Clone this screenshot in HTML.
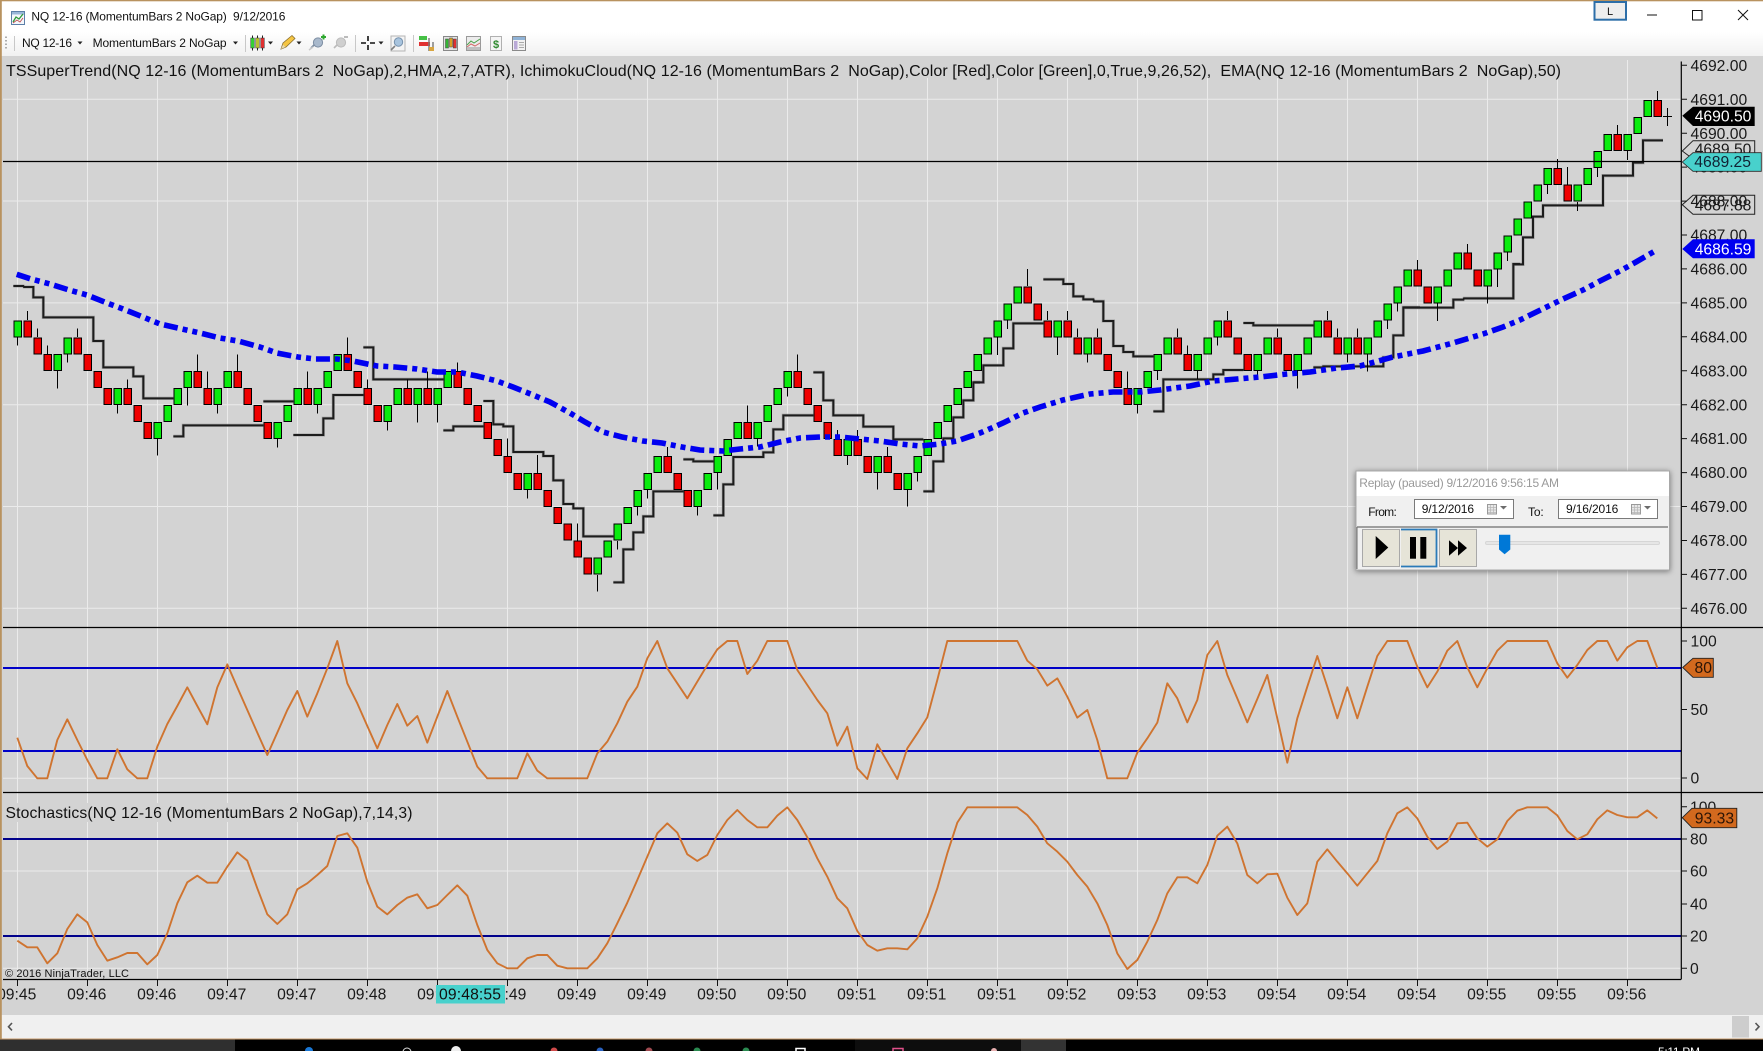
<!DOCTYPE html>
<html><head><meta charset="utf-8"><title>NQ 12-16 (MomentumBars 2 NoGap) 9/12/2016</title>
<style>
html,body{margin:0;padding:0;background:#d3d3d3;width:1763px;height:1051px;overflow:hidden}
svg{display:block}
text{font-family:"Liberation Sans",sans-serif;white-space:pre;fill:#111}
.ax text{font-size:15.7px;fill:#1a1a1a}
.osc{fill:none;stroke:#cf7430;stroke-width:1.9;stroke-linejoin:round;vector-effect:non-scaling-stroke}
.st{fill:none;stroke-linejoin:miter}
</style></head><body>
<svg xmlns="http://www.w3.org/2000/svg" width="1763" height="1051" viewBox="0 0 1763 1051">
<defs>
<linearGradient id="tb" x1="0" y1="0" x2="0" y2="1"><stop offset="0" stop-color="#fff"/><stop offset="1" stop-color="#f1f1f1"/></linearGradient>
<filter id="sh" x="-10%" y="-20%" width="120%" height="140%"><feDropShadow dx="0" dy="1" stdDeviation="3" flood-color="#000" flood-opacity=".45"/></filter>
<clipPath id="ch"><rect x="2" y="56" width="1761" height="960"/></clipPath>
</defs>
<!-- background -->
<rect width="1763" height="1051" fill="#d3d3d3"/>
<rect width="1763" height="32" fill="#fff"/>
<rect y="32" width="1763" height="24" fill="url(#tb)"/>
<rect width="1763" height="1.3" fill="#b8925f"/>

<!-- grid -->
<path stroke="#ebebeb" stroke-width="1" fill="none" d="M17.5 60V979M87.5 60V979M157.5 60V979M227.5 60V979M297.5 60V979M367.5 60V979M437.5 60V979M507.5 60V979M577.5 60V979M647.5 60V979M717.5 60V979M787.5 60V979M857.5 60V979M927.5 60V979M997.5 60V979M1067.5 60V979M1137.5 60V979M1207.5 60V979M1277.5 60V979M1347.5 60V979M1417.5 60V979M1487.5 60V979M1557.5 60V979M1627.5 60V979"/>
<path stroke="#ebebeb" stroke-width="1" fill="none" d="M3 99.2H1681M3 201H1681M3 302.9H1681M3 404.7H1681M3 506.5H1681M3 608.3H1681M3 778.3H1681M3 871H1681M3 968.3H1681"/>
<rect x="4" y="60" width="1558" height="18" fill="#d3d3d3"/>
<rect x="4" y="803" width="410" height="19" fill="#d3d3d3"/>

<!-- supertrend -->
<g class="st" stroke="#8a8a8a" stroke-opacity=".55">
<path transform="translate(0,260) scale(.33333)" stroke-width="10" d="M40 78H70L72 81H100V112H130V172H280V243H310V322H400V349H430V415H520M520 529H550V496H790M790 424H880M880 525H970V475H1000V405H1090M1090 262H1120V358H1330M1330 511H1360V499H1450"/>
<path transform="translate(480,340) scale(.33333)" stroke-width="10" d="M10 183H40V253H70V259H100V336H190V348H220V421H250V492H280V505H310V589H400M400 727H430V628H460V577H490V529H520V454H610M610 358H640V364H700M700 526H730V433H760V351H850V337H880V268H910V226H1000M1000 97H1030V181H1060V226H1150V260H1240V298H1330M1330 454H1360V364H1390V295H1420V232H1450V181H1480V127H1500"/>
<path transform="translate(960,260) scale(.33333)" stroke-width="10" d="M40 367H70V316H130V265H160V190H250M250 58H310V72H340V109H370V118H400L402 124H430V183H460V258H490V276H520V289H580M580 454H610V358H760V343H790V330H850M850 189H880V196H1060M1060 322H1090V319H1270V292H1300V226H1330V142H1380"/>
<path transform="translate(1380,240) scale(.33333)" stroke-width="10" d="M70 203H220V179H250L252 175H400V72H420"/>
<path transform="translate(1363,0) scale(.33333)" stroke-width="10" d="M450 793H480V712H510V650H540V616H720V527H810V488H840V421H900"/>
</g>
<g class="st" stroke="#1c1c1c">
<path transform="translate(0,260) scale(.33333)" stroke-width="6" d="M40 78H70L72 81H100V112H130V172H280V243H310V322H400V349H430V415H520M520 529H550V496H790M790 424H880M880 525H970V475H1000V405H1090M1090 262H1120V358H1330M1330 511H1360V499H1450"/>
<path transform="translate(480,340) scale(.33333)" stroke-width="6" d="M10 183H40V253H70V259H100V336H190V348H220V421H250V492H280V505H310V589H400M400 727H430V628H460V577H490V529H520V454H610M610 358H640V364H700M700 526H730V433H760V351H850V337H880V268H910V226H1000M1000 97H1030V181H1060V226H1150V260H1240V298H1330M1330 454H1360V364H1390V295H1420V232H1450V181H1480V127H1500"/>
<path transform="translate(960,260) scale(.33333)" stroke-width="6" d="M40 367H70V316H130V265H160V190H250M250 58H310V72H340V109H370V118H400L402 124H430V183H460V258H490V276H520V289H580M580 454H610V358H760V343H790V330H850M850 189H880V196H1060M1060 322H1090V319H1270V292H1300V226H1330V142H1380"/>
<path transform="translate(1380,240) scale(.33333)" stroke-width="6" d="M70 203H220V179H250L252 175H400V72H420"/>
<path transform="translate(1363,0) scale(.33333)" stroke-width="6" d="M450 793H480V712H510V650H540V616H720V527H810V488H840V421H900"/>
</g>

<!-- wicks -->
<path stroke="#000" stroke-width="1" fill="none" shape-rendering="crispEdges" d="M27.5 320V311M37.5 337V328.3M47.5 354V345.3M77.5 337V328.3M127.5 388V379.3M197.5 371V354.3M207.5 388V371.3M237.5 371V354.3M307.5 388V371.3M347.5 354V337.3M367.5 388V379.3M407.5 388V379.3M427.5 388V371.3M457.5 371V362.3M507.5 456V438.3M537.5 473V455M577.5 541V523.3M667.5 456V447M747.5 422V405.3M797.5 371V354.3M837.5 439V430M857.5 439V430M887.5 456V447M1027.5 286V269M1047.5 320V311M1067.5 320V311M1077.5 337V328.3M1097.5 337V328.3M1127.5 388V371.3M1177.5 337V328.3M1187.5 354V345.3M1227.5 320V311M1277.5 337V328.3M1327.5 320V311M1337.5 337V328.3M1357.5 337V328.3M1417.5 270V260M1467.5 253V244M1557.5 168V159M1567.5 185V167M1617.5 134V125M1657.5 100V91
M17.5 337V345.7M57.5 371V388.7M67.5 354V362.7M117.5 405V413.7M157.5 439V455.7M187.5 388V405.3M217.5 405V413.7M277.5 439V447.7M317.5 405V413.7M387.5 422V430.7M417.5 405V422.3M437.5 405V422.3M527.5 490V498.7M597.5 575V591.7M617.5 541V549.3M637.5 507V515.3M647.5 490V498.7M697.5 507V515.7M717.5 473V489.3M757.5 439V446.7M787.5 388V396.7M847.5 456V465M877.5 473V489.7M907.5 490V506.7M917.5 473V481.7M997.5 337V355M1007.5 320V329M1057.5 337V355M1087.5 354V362.7M1137.5 405V413.7M1157.5 371V380M1197.5 371V379M1217.5 337V345.7M1257.5 371V379M1297.5 371V388.7M1347.5 354V362.7M1367.5 354V371.3M1387.5 320V329M1397.5 303V311.7M1437.5 303V321M1487.5 286V303.3M1497.5 269V287M1507.5 252V261M1547.5 185V194M1577.5 202V211M1597.5 168V177M1627.5 151V160
M1667.5 108V126M1663 116.5H1672"/>

<!-- green bodies -->
<path fill="#0aec0e" stroke="#000" stroke-width="1" shape-rendering="crispEdges" d="M13.8 320.8h7.5v16h-7.5zM53.8 354.7h7.5v16h-7.5zM63.8 337.8h7.5v16h-7.5zM113.8 388.6h7.5v16h-7.5zM153.8 422.5h7.5v16h-7.5zM163.8 405.6h7.5v16h-7.5zM173.8 388.6h7.5v16h-7.5zM183.8 371.7h7.5v16h-7.5zM213.8 388.6h7.5v16h-7.5zM223.8 371.7h7.5v16h-7.5zM273.8 422.5h7.5v16h-7.5zM283.8 405.6h7.5v16h-7.5zM293.8 388.6h7.5v16h-7.5zM313.8 388.6h7.5v16h-7.5zM323.8 371.7h7.5v16h-7.5zM333.8 354.7h7.5v16h-7.5zM383.8 405.6h7.5v16h-7.5zM393.8 388.6h7.5v16h-7.5zM413.8 388.6h7.5v16h-7.5zM433.8 388.6h7.5v16h-7.5zM443.8 371.7h7.5v16h-7.5zM523.8 473.4h7.5v16h-7.5zM593.8 558.1h7.5v16h-7.5zM603.8 541.2h7.5v16h-7.5zM613.8 524.2h7.5v16h-7.5zM623.8 507.3h7.5v16h-7.5zM633.8 490.3h7.5v16h-7.5zM643.8 473.4h7.5v16h-7.5zM653.8 456.4h7.5v16h-7.5zM693.8 490.3h7.5v16h-7.5zM703.8 473.4h7.5v16h-7.5zM713.8 456.4h7.5v16h-7.5zM723.8 439.5h7.5v16h-7.5zM733.8 422.5h7.5v16h-7.5zM753.8 422.5h7.5v16h-7.5zM763.8 405.6h7.5v16h-7.5zM773.8 388.6h7.5v16h-7.5zM783.8 371.7h7.5v16h-7.5zM843.8 439.5h7.5v16h-7.5zM873.8 456.4h7.5v16h-7.5zM903.8 473.4h7.5v16h-7.5zM913.8 456.4h7.5v16h-7.5zM923.8 439.5h7.5v16h-7.5zM933.8 422.5h7.5v16h-7.5zM943.8 405.6h7.5v16h-7.5zM953.8 388.6h7.5v16h-7.5zM963.8 371.7h7.5v16h-7.5zM973.8 354.7h7.5v16h-7.5zM983.8 337.8h7.5v16h-7.5zM993.8 320.8h7.5v16h-7.5zM1003.8 303.9h7.5v16h-7.5zM1013.8 286.9h7.5v16h-7.5zM1053.8 320.8h7.5v16h-7.5zM1083.8 337.8h7.5v16h-7.5zM1133.8 388.6h7.5v16h-7.5zM1143.8 371.7h7.5v16h-7.5zM1153.8 354.7h7.5v16h-7.5zM1163.8 337.8h7.5v16h-7.5zM1193.8 354.7h7.5v16h-7.5zM1203.8 337.8h7.5v16h-7.5zM1213.8 320.8h7.5v16h-7.5zM1253.8 354.7h7.5v16h-7.5zM1263.8 337.8h7.5v16h-7.5zM1293.8 354.7h7.5v16h-7.5zM1303.8 337.8h7.5v16h-7.5zM1313.8 320.8h7.5v16h-7.5zM1343.8 337.8h7.5v16h-7.5zM1363.8 337.8h7.5v16h-7.5zM1373.8 320.8h7.5v16h-7.5zM1383.8 303.9h7.5v16h-7.5zM1393.8 286.9h7.5v16h-7.5zM1403.8 270h7.5v16h-7.5zM1433.8 286.9h7.5v16h-7.5zM1443.8 270h7.5v16h-7.5zM1453.8 253h7.5v16h-7.5zM1483.8 270h7.5v16h-7.5zM1493.8 253h7.5v16h-7.5zM1503.8 236.1h7.5v16h-7.5zM1513.8 219.1h7.5v16h-7.5zM1523.8 202.2h7.5v16h-7.5zM1533.8 185.2h7.5v16h-7.5zM1543.8 168.3h7.5v16h-7.5zM1573.8 185.2h7.5v16h-7.5zM1583.8 168.3h7.5v16h-7.5zM1593.8 151.3h7.5v16h-7.5zM1603.8 134.4h7.5v16h-7.5zM1623.8 134.4h7.5v16h-7.5zM1633.8 117.4h7.5v16h-7.5zM1643.8 100.4h7.5v16h-7.5z"/>
<!-- red bodies -->
<path fill="#f00000" stroke="#000" stroke-width="1" shape-rendering="crispEdges" d="M23.8 320.8h7.5v16h-7.5zM33.8 337.8h7.5v16h-7.5zM43.8 354.7h7.5v16h-7.5zM73.8 337.8h7.5v16h-7.5zM83.8 354.7h7.5v16h-7.5zM93.8 371.7h7.5v16h-7.5zM103.8 388.6h7.5v16h-7.5zM123.8 388.6h7.5v16h-7.5zM133.8 405.6h7.5v16h-7.5zM143.8 422.5h7.5v16h-7.5zM193.8 371.7h7.5v16h-7.5zM203.8 388.6h7.5v16h-7.5zM233.8 371.7h7.5v16h-7.5zM243.8 388.6h7.5v16h-7.5zM253.8 405.6h7.5v16h-7.5zM263.8 422.5h7.5v16h-7.5zM303.8 388.6h7.5v16h-7.5zM343.8 354.7h7.5v16h-7.5zM353.8 371.7h7.5v16h-7.5zM363.8 388.6h7.5v16h-7.5zM373.8 405.6h7.5v16h-7.5zM403.8 388.6h7.5v16h-7.5zM423.8 388.6h7.5v16h-7.5zM453.8 371.7h7.5v16h-7.5zM463.8 388.6h7.5v16h-7.5zM473.8 405.6h7.5v16h-7.5zM483.8 422.5h7.5v16h-7.5zM493.8 439.5h7.5v16h-7.5zM503.8 456.4h7.5v16h-7.5zM513.8 473.4h7.5v16h-7.5zM533.8 473.4h7.5v16h-7.5zM543.8 490.3h7.5v16h-7.5zM553.8 507.3h7.5v16h-7.5zM563.8 524.2h7.5v16h-7.5zM573.8 541.2h7.5v16h-7.5zM583.8 558.1h7.5v16h-7.5zM663.8 456.4h7.5v16h-7.5zM673.8 473.4h7.5v16h-7.5zM683.8 490.3h7.5v16h-7.5zM743.8 422.5h7.5v16h-7.5zM793.8 371.7h7.5v16h-7.5zM803.8 388.6h7.5v16h-7.5zM813.8 405.6h7.5v16h-7.5zM823.8 422.5h7.5v16h-7.5zM833.8 439.5h7.5v16h-7.5zM853.8 439.5h7.5v16h-7.5zM863.8 456.4h7.5v16h-7.5zM883.8 456.4h7.5v16h-7.5zM893.8 473.4h7.5v16h-7.5zM1023.8 286.9h7.5v16h-7.5zM1033.8 303.9h7.5v16h-7.5zM1043.8 320.8h7.5v16h-7.5zM1063.8 320.8h7.5v16h-7.5zM1073.8 337.8h7.5v16h-7.5zM1093.8 337.8h7.5v16h-7.5zM1103.8 354.7h7.5v16h-7.5zM1113.8 371.7h7.5v16h-7.5zM1123.8 388.6h7.5v16h-7.5zM1173.8 337.8h7.5v16h-7.5zM1183.8 354.7h7.5v16h-7.5zM1223.8 320.8h7.5v16h-7.5zM1233.8 337.8h7.5v16h-7.5zM1243.8 354.7h7.5v16h-7.5zM1273.8 337.8h7.5v16h-7.5zM1283.8 354.7h7.5v16h-7.5zM1323.8 320.8h7.5v16h-7.5zM1333.8 337.8h7.5v16h-7.5zM1353.8 337.8h7.5v16h-7.5zM1413.8 270h7.5v16h-7.5zM1423.8 286.9h7.5v16h-7.5zM1463.8 253h7.5v16h-7.5zM1473.8 270h7.5v16h-7.5zM1553.8 168.3h7.5v16h-7.5zM1563.8 185.2h7.5v16h-7.5zM1613.8 134.4h7.5v16h-7.5zM1653.8 100.4h7.5v16h-7.5z"/>

<!-- EMA -->
<polyline fill="none" stroke="#0000f0" stroke-width="5.6" stroke-dasharray="14 5 5 5 5 5" points="16.7,274.3 30,278.7 50,284 69,290 87,295 107,303 123,309 143,317 160,324 182,329 200,333 220,338 238,341 260,347 277,353 298,357 315,359 337,359 353,361 377,366 395,367 417,369 437,372 457,372 477,376 497,381 513,387 533,395 550,402 570,413 585,422 603,432 622,437 643,441 662,443 682,447 700,450 723,451 740,449 760,447 780,442 800,438 820,437 840,437 860,439 880,441 900,444 920,446 940,444 957,441 980,433 1003,423 1023,413 1040,407 1063,400 1090,394 1113,392 1140,392 1160,390 1190,386 1213,381 1237,379 1260,377 1287,374 1310,372 1337,368 1360,366 1393,357 1423,351 1453,343 1483,334 1503,327 1520,320 1563,299 1583,290 1600,281 1620,271 1636,262 1655,251"/>

<!-- horizontal rules -->
<path stroke="#000" stroke-width="1.2" fill="none" d="M3 161.5H1681M3 627.5H1763M3 792.5H1763M3 979.5H1681"/>
<path stroke="#0000c8" stroke-width="2" fill="none" d="M3 668H1681M3 751H1681"/>
<path stroke="#00008b" stroke-width="2" fill="none" d="M3 839H1681M3 936H1681"/>

<!-- oscillators -->
<polyline class="osc" transform="translate(17.3,630) scale(10,.33333)" points="0,323 1,408 2,445 3,445 4,330 5,268 6,330 7,390 8,445 9,445 10,358 11,418 12,445 13,445 14,350 15,282 16,228 17,172 18,228 19,283 20,172 21,103 22,172 23,240 24,308 25,375 26,308 27,240 28,183 29,260 30,190 31,115 32,33 33,160 34,220 35,288 36,355 37,285 38,222 39,287 40,258 41,338 42,260 43,183 44,260 45,335 46,410 47,445 48,445 49,445 50,445 51,370 52,422 53,445 54,445 55,445 56,445 57,445 58,370 59,335 60,280 61,215 62,170 63,85 64,33 65,115 66,160 67,205 68,155 69,105 70,58 71,33 72,33 73,132 74,92 75,33 76,33 77,33 78,120 79,165 80,210 81,250 82,347 83,290 84,415 85,447 86,343 87,395 88,447 89,355 90,310 91,262 92,150 93,33 94,33 95,33 96,33 97,33 98,33 99,33 100,33 101,92 102,118 103,167 104,145 105,200 106,263 107,240 108,330 109,445 110,445 111,445 112,368 113,325 114,278 115,160 116,205 117,277 118,210 119,75 120,33 121,135 122,205 123,277 124,207 125,135 126,265 127,398 128,265 129,170 130,78 131,170 132,265 133,172 134,265 135,170 136,78 137,33 138,33 139,33 140,110 141,172 142,125 143,62 144,33 145,112 146,172 147,115 148,62 149,33 150,33 151,33 152,33 153,33 154,100 155,143 156,105 157,60 158,33 159,33 160,92 161,52 162,33 163,33 164,113"/>
<polyline class="osc" transform="translate(17.3,630) scale(10,.33333)" points="0,932 1,952 2,952 3,1000 4,970 5,897 6,853 7,877 8,945 9,992 10,982 11,969 12,969 13,1003 14,975 15,910 16,820 17,757 18,737 19,758 20,758 21,710 22,667 23,692 24,775 25,853 26,882 27,853 28,778 29,760 30,735 31,708 32,618 33,610 34,653 35,755 36,830 37,853 38,825 39,803 40,793 41,835 42,825 43,795 44,766 45,797 46,885 47,960 48,1000 49,1015 50,1015 51,985 52,975 53,975 54,1007 55,1015 56,1015 57,1015 58,985 59,940 60,880 61,818 62,750 63,680 64,610 65,580 66,608 67,673 68,693 69,675 70,615 71,570 72,540 73,570 74,592 75,592 76,557 77,532 78,570 79,622 80,685 81,740 82,805 83,835 84,903 85,945 86,962 87,955 88,955 89,958 90,925 91,860 92,775 93,670 94,578 95,532 96,532 97,532 98,532 99,532 100,532 101,555 102,590 103,640 104,665 105,695 106,735 107,770 108,820 109,885 110,970 111,1017 112,990 113,935 114,870 115,790 116,742 117,742 118,760 119,705 120,617 121,590 122,640 123,735 124,760 125,733 126,731 127,803 128,855 129,820 130,695 131,658 132,695 133,730 134,767 135,730 136,693 137,610 138,550 139,532 140,565 141,620 142,657 143,635 144,580 145,578 146,625 147,650 148,628 149,573 150,542 151,532 152,532 153,532 154,556 155,603 156,628 157,613 158,568 159,541 160,555 161,562 162,562 163,541 164,565"/>

<!-- chart titles -->
<text x="6" y="76" font-size="16" textLength="1555" lengthAdjust="spacing">TSSuperTrend(NQ 12-16 (MomentumBars 2  NoGap),2,HMA,2,7,ATR), IchimokuCloud(NQ 12-16 (MomentumBars 2  NoGap),Color [Red],Color [Green],0,True,9,26,52),  EMA(NQ 12-16 (MomentumBars 2  NoGap),50)</text>
<text x="5.5" y="818" font-size="15.7" textLength="407" lengthAdjust="spacing">Stochastics(NQ 12-16 (MomentumBars 2 NoGap),7,14,3)</text>
<text x="5" y="977" font-size="11" textLength="124" lengthAdjust="spacing">© 2016 NinjaTrader, LLC</text>

<!-- right axis -->
<path stroke="#000" stroke-width="1.2" fill="none" d="M1681.3 61.5V979.5"/>
<path stroke="#111" stroke-width="1" fill="none" d="M1681 65.3h6M1681 99.2h6M1681 133.2h6M1681 167.1h6M1681 201.1h6M1681 235h6M1681 268.9h6M1681 302.9h6M1681 336.8h6M1681 370.8h6M1681 404.7h6M1681 438.6h6M1681 472.6h6M1681 506.5h6M1681 540.5h6M1681 574.4h6M1681 608.3h6M1681 641h6M1681 709.5h6M1681 778h6M1681 806.7h6M1681 839h6M1681 871h6M1681 904h6M1681 936h6M1681 968.3h6
M17.5 980v6M87.5 980v6M157.5 980v6M227.5 980v6M297.5 980v6M367.5 980v6M437.5 980v6M507.5 980v6M577.5 980v6M647.5 980v6M717.5 980v6M787.5 980v6M857.5 980v6M927.5 980v6M997.5 980v6M1067.5 980v6M1137.5 980v6M1207.5 980v6M1277.5 980v6M1347.5 980v6M1417.5 980v6M1487.5 980v6M1557.5 980v6M1627.5 980v6"/>
<g class="ax">
<text x="1690.5" y="70.9">4692.00</text><text x="1690.5" y="104.8">4691.00</text><text x="1690.5" y="138.8">4690.00</text><text x="1690.5" y="172.7">4689.00</text><text x="1690.5" y="206.7">4688.00</text><text x="1690.5" y="240.6">4687.00</text><text x="1690.5" y="274.5">4686.00</text><text x="1690.5" y="308.5">4685.00</text><text x="1690.5" y="342.4">4684.00</text><text x="1690.5" y="376.4">4683.00</text><text x="1690.5" y="410.3">4682.00</text><text x="1690.5" y="444.2">4681.00</text><text x="1690.5" y="478.2">4680.00</text><text x="1690.5" y="512.1">4679.00</text><text x="1690.5" y="546.1">4678.00</text><text x="1690.5" y="580">4677.00</text><text x="1690.5" y="613.9">4676.00</text>
<text x="1690.5" y="646.6">100</text><text x="1690.5" y="715.1">50</text><text x="1690.5" y="783.6">0</text>
<text x="1690" y="812.3">100</text><text x="1690" y="844.6">80</text><text x="1690" y="876.6">60</text><text x="1690" y="909.6">40</text><text x="1690" y="941.6">20</text><text x="1690" y="973.9">0</text>
</g>

<!-- price flags -->
<g class="ax">
<path d="M1682.3 151 1693 140.7H1754.7V159H1693Z" fill="none" stroke="#222"/>
<text x="1694.7" y="154.5">4689.50</text>
<path d="M1682.3 204.8 1693 195.3H1754.7V214.3H1693Z" fill="none" stroke="#222"/>
<text x="1694.7" y="210.4">4687.88</text>
<path d="M1682.3 115.7 1693 106.7H1754.7V126H1693Z" fill="#000"/>
<text x="1694.7" y="121.5" style="fill:#fff">4690.50</text>
<path d="M1682.3 162 1693 152.7H1761.3V171.3H1693Z" fill="#48d1cc" stroke="#2a2a2a" stroke-width=".8"/>
<text x="1694.3" y="167" style="fill:#123">4689.25</text>
<path d="M1682.3 249 1693 239.3H1754.7V258.3H1693Z" fill="#0000f0"/>
<text x="1694.7" y="254.6" style="fill:#fff">4686.59</text>
<path d="M1682.7 667.5 1693 658.3H1713.3V677.3H1693Z" fill="#d2691e" stroke="#222" stroke-width=".9"/>
<text x="1694.5" y="673.2" style="fill:#2a1406">80</text>
<path d="M1682.3 817.7 1692 808.3H1736.8V827.7H1692Z" fill="#d2691e" stroke="#222" stroke-width=".9"/>
<text x="1694.8" y="823.3" style="fill:#2a1406">93.33</text>
</g>

<!-- time axis -->
<g class="ax" text-anchor="middle" clip-path="url(#ch)">
<text x="16.7" y="999.3">09:45</text><text x="86.7" y="999.3">09:46</text><text x="156.7" y="999.3">09:46</text><text x="226.7" y="999.3">09:47</text><text x="296.7" y="999.3">09:47</text><text x="366.7" y="999.3">09:48</text><text x="436.7" y="999.3">09:48</text><text x="506.7" y="999.3">09:49</text><text x="576.7" y="999.3">09:49</text><text x="646.7" y="999.3">09:49</text><text x="716.7" y="999.3">09:50</text><text x="786.7" y="999.3">09:50</text><text x="856.7" y="999.3">09:51</text><text x="926.7" y="999.3">09:51</text><text x="996.7" y="999.3">09:51</text><text x="1066.7" y="999.3">09:52</text><text x="1136.7" y="999.3">09:53</text><text x="1206.7" y="999.3">09:53</text><text x="1276.7" y="999.3">09:54</text><text x="1346.7" y="999.3">09:54</text><text x="1416.7" y="999.3">09:54</text><text x="1486.7" y="999.3">09:55</text><text x="1556.7" y="999.3">09:55</text><text x="1626.7" y="999.3">09:56</text>
</g>
<rect x="436" y="985" width="69" height="18.5" fill="#48d1cc"/>
<text x="439" y="999.3" font-size="15.7" fill="#123" textLength="62">09:48:55</text>

<!-- title bar -->
<g>
<rect x="11.5" y="11.5" width="13" height="13" fill="#f4f7fb" stroke="#5c7fa8"/>
<rect x="12" y="12" width="12" height="2.5" fill="#9ab7d8"/>
<polyline points="13,22 16,17 19,19 23,14" fill="none" stroke="#2f9a3a" stroke-width="1.3"/>
<polyline points="13,23 17,20 20,22 23,18" fill="none" stroke="#c05050" stroke-width=".9"/>
<text x="31.4" y="20.3" font-size="12" fill="#222" textLength="254" lengthAdjust="spacing">NQ 12-16 (MomentumBars 2 NoGap)  9/12/2016</text>
<rect x="1594.5" y="2" width="31.5" height="17.7" fill="#eeeeee" stroke="#2d6ea8" stroke-width="2"/>
<text x="1610" y="15" font-size="11" text-anchor="middle" fill="#222">L</text>
<path d="M1647 15H1657" stroke="#111" stroke-width="1" fill="none"/>
<rect x="1692.5" y="10.5" width="9.5" height="9.5" fill="none" stroke="#111"/>
<path d="M1738 10 1748 20M1748 10 1738 20" stroke="#111" stroke-width="1" fill="none"/>
</g>

<!-- toolbar -->
<g>
<path d="M6 36.5v1.5M6 40v1.5M6 43.5v1.5M6 47v1.5" stroke="#999" stroke-width="1.6" fill="none"/>
<path d="M14.5 36V51M245.5 35V52M355.5 35V52M413.5 35V52" stroke="#c8c8c8" fill="none"/>
<text x="22" y="47" font-size="12" fill="#222" textLength="50">NQ 12-16</text>
<path d="M77.5 41.5h5l-2.5 3z" fill="#222"/>
<text x="92.6" y="47" font-size="12" fill="#222" textLength="134">MomentumBars 2 NoGap</text>
<path d="M233 41.5h5l-2.5 3z" fill="#222"/>
<!-- candles -->
<path d="M252.5 35.5V50.5M257.5 35.5V50.5M262.5 35.5V50.5" stroke="#222" fill="none"/>
<rect x="250.7" y="38" width="3.6" height="10" fill="#35d035" stroke="#333" stroke-width=".5"/>
<rect x="255.7" y="38" width="3.6" height="10" fill="#b8c030" stroke="#333" stroke-width=".5"/>
<rect x="260.7" y="38" width="3.6" height="10" fill="#e03030" stroke="#333" stroke-width=".5"/>
<path d="M268 41.5h5l-2.5 3z" fill="#222"/>
<!-- pencil -->
<path d="M281 49 283 43 292 35.5 295 38.5 286 47Z" fill="#f5c542" stroke="#8a7030" stroke-width=".8"/>
<path d="M281 49 283 44.5 285.5 47Z" fill="#e6d8b0"/>
<path d="M296.5 41.5h5l-2.5 3z" fill="#222"/>
<!-- plug + -->
<path d="M311 48 315 44" stroke="#7d8ea3" stroke-width="1.6" fill="none"/>
<circle cx="318" cy="42.5" r="4.6" fill="#a9b9cc" stroke="#7d8ea3"/>
<path d="M321 37h5M323.5 34.5v5" stroke="#2fa82f" stroke-width="2" fill="none"/>
<path d="M309 50 313 47" stroke="#c9c9c9" stroke-width="1.5" fill="none"/>
<!-- plug - -->
<path d="M334 48 338 44" stroke="#bbb" stroke-width="1.6" fill="none"/>
<circle cx="341" cy="42.5" r="4.6" fill="#cfcfcf" stroke="#bbb"/>
<path d="M344 37h4" stroke="#bbb" stroke-width="2" fill="none"/>
<!-- crosshair -->
<path d="M361 43H366M370 43H375M368 36V41M368 45V50" stroke="#111" stroke-width="1.6" fill="none"/>
<path d="M378.5 41.5h5l-2.5 3z" fill="#222"/>
<!-- magnifier doc -->
<rect x="391" y="36" width="14" height="15" fill="#f4f4f4" stroke="#b5b5b5"/>
<circle cx="398.5" cy="42" r="4.2" fill="#a8c4de" stroke="#7792ad"/>
<path d="M395 46 391 50" stroke="#808080" stroke-width="1.6" fill="none"/>
<!-- bars -->
<rect x="419" y="36" width="8" height="4" fill="#45c045"/><rect x="419" y="42" width="11" height="4" fill="#e03030"/>
<path d="M429 38V51M433 42V51" stroke="#777" stroke-width="1.4" fill="none"/>
<rect x="429" y="47" width="5" height="4" fill="#d8a540"/>
<!-- candles box -->
<rect x="443.5" y="36.5" width="14" height="14" fill="#e3e3e3" stroke="#888"/>
<rect x="445.5" y="39" width="3" height="9" fill="#35b535" stroke="#444" stroke-width=".5"/>
<rect x="449.5" y="38" width="3" height="9" fill="#d8a020" stroke="#444" stroke-width=".5"/>
<rect x="453.3" y="39" width="3" height="9" fill="#e03030" stroke="#444" stroke-width=".5"/>
<!-- chart box -->
<rect x="466.5" y="36.5" width="14" height="14" fill="#ececec" stroke="#9a9a9a"/>
<polyline points="467,45 471,41 474,43 480,39" fill="none" stroke="#4aa24a"/>
<polyline points="467,47 471,44 475,46 480,43" fill="none" stroke="#d36a6a"/>
<rect x="467" y="47" width="13" height="3" fill="#bfbfbf"/>
<!-- $ doc -->
<rect x="490.5" y="36.5" width="11" height="14" fill="#f4f4f4" stroke="#b0b0b0"/>
<text x="496" y="48" font-size="11" font-weight="bold" text-anchor="middle" style="fill:#2f8a2f">$</text>
<!-- props -->
<rect x="512.5" y="36.5" width="13" height="14" fill="#f2f2f2" stroke="#8a8a8a"/>
<rect x="513" y="37" width="12" height="3" fill="#8fb2d6"/>
<rect x="514" y="41" width="3.5" height="8.5" fill="#b9a9d6"/>
<path d="M519 42.5h5M519 45h5M519 47.5h5" stroke="#aaa" fill="none"/>
</g>

<!-- replay dialog -->
<g>
<rect x="1356" y="471" width="313.5" height="99" fill="#f0f0f0" stroke="#a8a8a8" filter="url(#sh)"/>
<rect x="1356.5" y="471.5" width="312.5" height="24.5" fill="#fff"/>
<text x="1359.3" y="487" font-size="12" style="fill:#9a9a9a" textLength="199.7" lengthAdjust="spacing">Replay (paused) 9/12/2016 9:56:15 AM</text>
<text x="1368.3" y="516" font-size="12" fill="#222" textLength="28.5">From:</text>
<rect x="1414.5" y="499.5" width="99" height="19" fill="#fff" stroke="#7a7a7a"/>
<text x="1421.7" y="513" font-size="12" fill="#222" textLength="52.3">9/12/2016</text>
<rect x="1487.5" y="504.5" width="9" height="9.5" fill="#e8e8e8" stroke="#9a9a9a"/>
<path d="M1488 507.5h8M1488 510h8M1488 512.5h8M1490.5 505v9M1493.5 505v9" stroke="#b5b5b5" stroke-width=".7" fill="none"/>
<path d="M1500 506h7l-3.5 3.5z" fill="#6d6d6d"/>
<text x="1528" y="516" font-size="12" fill="#222" textLength="15.7">To:</text>
<rect x="1558.5" y="499.5" width="99" height="19" fill="#fff" stroke="#7a7a7a"/>
<text x="1566" y="513" font-size="12" fill="#222" textLength="52.3">9/16/2016</text>
<rect x="1631.5" y="504.5" width="9" height="9.5" fill="#e8e8e8" stroke="#9a9a9a"/>
<path d="M1632 507.5h8M1632 510h8M1632 512.5h8M1634.5 505v9M1637.5 505v9" stroke="#b5b5b5" stroke-width=".7" fill="none"/>
<path d="M1644 506h7l-3.5 3.5z" fill="#6d6d6d"/>
<path d="M1357 527H1668" stroke="#6e6e6e" stroke-width="1.2" fill="none"/>
<path d="M1357 527V569" stroke="#6e6e6e" stroke-width="1" fill="none"/>
<rect x="1362.5" y="529.5" width="37" height="37" fill="#e6e4d8" stroke="#a8a8a8"/>
<path d="M1375.7 536 1388.3 547.5 1375.7 559Z" fill="#000"/>
<rect x="1401" y="529.5" width="35.5" height="37" fill="#e6e4d8"/>
<path d="M1401 529.5H1436.5V566.5H1401" fill="none" stroke="#2b7ab8" stroke-width="1.8"/>
<rect x="1410" y="537" width="6" height="21.7" fill="#000"/><rect x="1420.3" y="537" width="6" height="21.7" fill="#000"/>
<rect x="1439.5" y="529.5" width="37" height="37" fill="#e6e4d8" stroke="#a8a8a8"/>
<path d="M1449 540.3 1458 548 1449 555.7ZM1458 540.3 1467 548 1458 555.7Z" fill="#000"/>
<rect x="1485.5" y="541.5" width="174" height="3" rx="1.5" fill="#e6e6e6" stroke="#d6d6d6"/>
<path d="M1499 534.7H1510.3V549.5L1504.6 554.3 1499 549.5Z" fill="#0078d7"/>
</g>

<!-- scrollbar & frame -->
<rect y="1015" width="1763" height="24" fill="#f0f0f0"/>
<path d="M12 1023 8.5 1026.7 12 1030.4" fill="none" stroke="#555" stroke-width="1.6"/>
<rect x="1732" y="1016" width="17" height="21.5" fill="#cdcdcd"/>
<path d="M1755.5 1023 1759 1026.7 1755.5 1030.4" fill="none" stroke="#555" stroke-width="1.6"/>
<rect y="1038.5" width="1763" height="1" fill="#c99a6a"/>
<rect x="0" y="0" width="1.8" height="1039" fill="#b8925f"/>

<!-- taskbar -->
<rect y="1039.5" width="1763" height="11.5" fill="#000"/>
<rect y="1039.5" width="235" height="11.5" fill="#2f2f2f"/>
<rect x="855" y="1039.5" width="166" height="11.5" fill="#0d0d0d"/>
<rect x="1021" y="1039.5" width="45" height="11.5" fill="#333"/>
<circle cx="309" cy="1051" r="4" fill="#1a78d6"/>
<circle cx="407" cy="1052" r="4" fill="none" stroke="#ddd"/>
<circle cx="456" cy="1051" r="5" fill="#eee"/>
<circle cx="554" cy="1051" r="3.5" fill="#d04a4a"/>
<circle cx="600" cy="1051" r="3.5" fill="#2a62c0"/>
<circle cx="649" cy="1051" r="3.5" fill="#a04a50"/>
<circle cx="697" cy="1051" r="3.5" fill="#2a8a50"/>
<circle cx="746" cy="1051" r="3.5" fill="#2a8a50"/>
<rect x="796" y="1048.5" width="9" height="4" fill="none" stroke="#fff" stroke-width="1.5"/>
<rect x="893" y="1048.5" width="10" height="4" fill="none" stroke="#e0508a" stroke-width="1.5"/>
<circle cx="994" cy="1051" r="3" fill="#e8b0b0"/>
<text x="1658" y="1056" font-size="12" style="fill:#fff" textLength="42">5:11 PM</text>
</svg>
</body></html>
